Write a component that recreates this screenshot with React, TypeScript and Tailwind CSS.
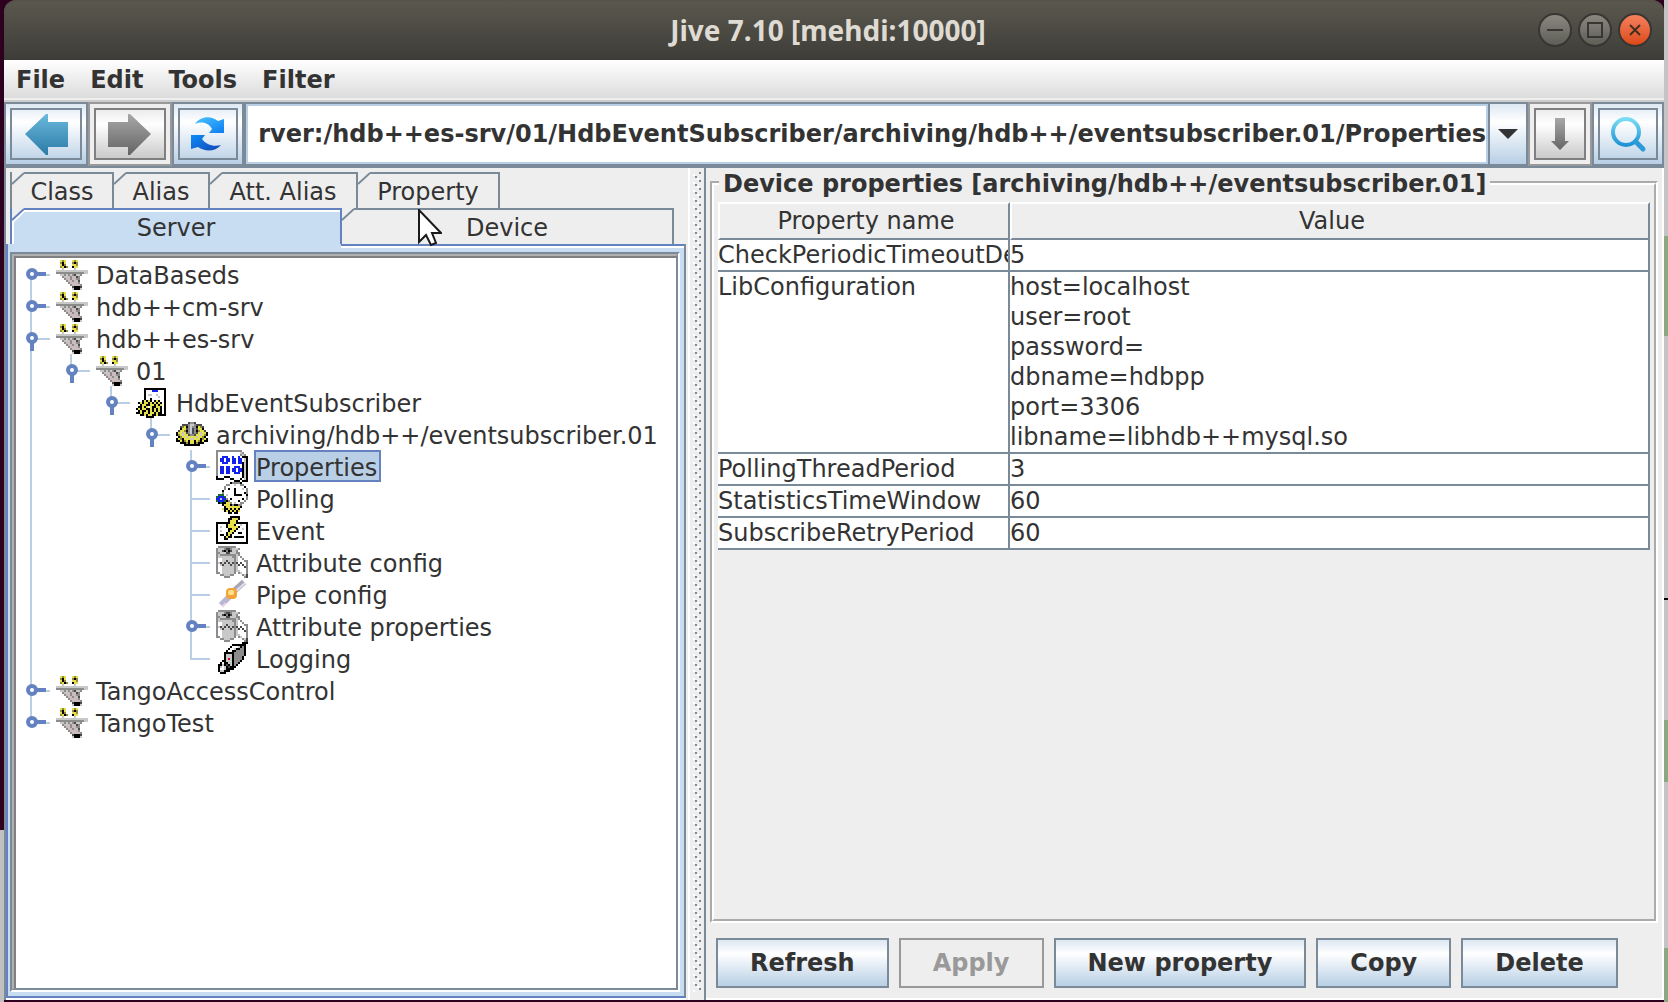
import { useState } from "react";
import type { ReactNode } from "react";

const palette: Record<string, string> = {
  K: "#000000",
  D: "#4a4a4a",
  G: "#8c8c8c",
  L: "#c8c8c8",
  W: "#ffffff",
  Y: "#e6e04a",
  O: "#8f8a3c",
  P: "#cbbdbd",
  B: "#1420f0",
  N: "#1d6b2a",
  R: "#d01020",
};

const sprites = {
  server: [
    "................",
    "..YOY...YOY.....",
    "..OKY...OKO.....",
    "..YKO...YYO.....",
    "..OYKO..KYY.....",
    "...L.....L......",
    "LLLLLLLLLLLLLLLL",
    "GGGGGGGGGGGGGGLL",
    "..LLGLGLGDLLG...",
    "...GPLPGPPDG....",
    "....GPPGPPGG....",
    ".....GPPGPPD....",
    "......GPPPPG....",
    ".......GPPPPG...",
    "........DKKKD...",
    "........LKKKL...",
  ],
  classDoc: [
    "................",
    "....KKKKKKKKKKK.",
    "....KWWWBBBWWWK.",
    "....KWWWWWWWWWK.",
    "....KWLLWWLWWWK.",
    "....KWWWWWWLWWK.",
    "....KWWKWWWWWWK.",
    "...KYKYKWKYKWWK.",
    ".KYKYYKYKYKYKWK.",
    "..KYYKKYYKYKYWK.",
    ".KKYKYWYKKYYKWK.",
    "KYKYYKKYKYKYKWK.",
    ".KYKKYKYKYKYKWK.",
    "KKYKYYKYYKYKKWK.",
    "..KKYKYYKKYKKKK.",
    ".....KKKK.......",
  ],
  device: [
    "................",
    "................",
    "......DGGD......",
    "...DDDGLLGDDD...",
    "..DOYKGLGGKYOD..",
    "..KYYDGLDGDYYK..",
    ".DYYOKGLDGKOYYD.",
    "KYYLYDGLDGDYLYYK",
    "KOYLYYDGGDYYLYOK",
    ".KOYYLYYYYLYYOK.",
    "KYOKYYYLLYYYKOYK",
    "KKYKOYKYYKYOKYKK",
    "..KKKOKYYKOKKK..",
    "....KKKKKKKK....",
    "................",
    "................",
  ],
  properties: [
    "GGGGGGGGGGGGG...",
    "GWWWWWWWWWWWLG..",
    "GWWWWWWWWWWWGLG.",
    "GWWBBBWWBWWBWKKK",
    "GWBBWBBWBBWBBWLK",
    "GWBBWBBWBBWBBWLK",
    "GWWBBBWWBBWBBKLK",
    "GWWWWWWWWWWWWKLK",
    "GWBBWBBWWBBBWKLK",
    "GWBBWBBWBBWBBKLK",
    "GWBBWBBWBBWBBKLK",
    "GWBBWBBWWBBBWKLK",
    "GWWWWWWWWWWWWKLK",
    "KWWWKKKWWWWWWKLK",
    "KKKK...KKWWWKWLK",
    ".........KKK.KKK",
  ],
  polling: [
    ".......KGGGGK...",
    ".....GGWWLWWGG..",
    "....GWWWWWWWWWK.",
    "....GWKWWKWWWLWG",
    "...KWWWWWKWWWWWG",
    "...GWWWWWKWWWWKG",
    ".NNNWLWWWKKKKWWK",
    "NBBBNWWWWWWWWWWG",
    "BBLBBGWKWWWWWKWG",
    "NBBBNKGWWWWKWWG.",
    ".KNKKYYGWLWWGG..",
    "...KYYYKGKKGG...",
    "....KYYYYYYYK...",
    "...YKKYKYKYK....",
    "....KYKYKYKY....",
    "......KK.KK.....",
  ],
  event: [
    "................",
    ".......KKKKK....",
    "......KKYYYK....",
    "......KYYYK.....",
    "KKKKKKKYYYKKKKKK",
    "KWWWWKYYYKWWLWWK",
    "KWLWWKYYYYYKWWWK",
    "KWWWWWKKYYKWWLWK",
    "KWLWWWKYYKWWWWWK",
    "KWWWWKYYKWWKKWWK",
    "KWKKWKYKWWWWWWWK",
    "KWWWKYKKWKKKKKWK",
    "KWWWKKWWWWWWWWWK",
    "KWWWWWWWWWWWWWWK",
    "KKKKKKKKKKKKKKKK",
    "................",
  ],
  attribute: [
    ".GGGGGGGGG......",
    "GLLLGDDGLLLG....",
    "GLLDKGKDLLG.....",
    "GGLLLDDLLLGG....",
    "GLGGGGGGGGLG....",
    "GLLLLLLLGGLWG...",
    "GWWLLLLLLGLWWG..",
    "GWWLLDLLLGLWWWGG",
    "GLDLDLDLDGDWDWWG",
    "GWLDLLLDLGLDWDWG",
    "GWWLLLLLLGLWWWDG",
    "GWWLLLLLLGLWWWWG",
    "GWWLLLLLLGLLWWWG",
    "GGWLLLLLLG.GLWWG",
    "..GGLLLGG....GLD",
    "....GGG.......GD",
  ],
  logging: [
    ".............KKK",
    "........KKKKKKK.",
    ".......KWWWLKGK.",
    "......KWWLKKGGK.",
    ".....KWWKKGGGGK.",
    "....KKKKKGGGGGK.",
    "....KLLLKGGGGGK.",
    "....KLLLKGGGGK..",
    "....KLRLKGGGGK..",
    "...KKLLLKGGGK...",
    "..KWKKLLKGGK....",
    ".KKLKDKLKGK.....",
    ".KLWLKDKKK......",
    ".KWWLKKKK.......",
    ".KLLKKK.........",
    "..KKK...........",
  ],
};

type SpriteName = keyof typeof sprites;

function Sprite({ name }: { name: SpriteName }) {
  return (
    <svg viewBox="0 0 16 16" className="size-8 shrink-0" shapeRendering="crispEdges" aria-hidden="true">
      {sprites[name].flatMap((row, y) =>
        row.split("").map((ch, x) =>
          palette[ch] ? <rect key={`${x}-${y}`} x={x} y={y} width="1" height="1" fill={palette[ch]} /> : null
        )
      )}
    </svg>
  );
}

function PipeIcon() {
  return (
    <svg viewBox="0 0 32 32" className="size-8 shrink-0" aria-hidden="true">
      <path d="M5 27 L14 18" stroke="#b9b6d2" strokeWidth="6" />
      <path d="M18 13 L28 4" stroke="#a9a7b8" strokeWidth="6" />
      <path d="M20 13 L29 5" stroke="#e3e0ee" strokeWidth="2" />
      <path d="M6 29 L10 25" stroke="#f0d5ea" strokeWidth="2" />
      <rect x="10" y="10" width="11" height="11" rx="4" fill="#f2a43a" />
      <rect x="12" y="12" width="6" height="5" rx="2" fill="#ffe08a" />
    </svg>
  );
}

interface TreeRow {
  label: string;
  depth: number;
  icon: SpriteName | "pipe";
  handle?: "open" | "closed";
  lines: number[];
  first?: boolean;
  last?: boolean;
}

// lines: the outer levels whose guide runs straight through the row
const rows: TreeRow[] = [
  { label: "DataBaseds", depth: 0, icon: "server", handle: "closed", lines: [], first: true },
  { label: "hdb++cm-srv", depth: 0, icon: "server", handle: "closed", lines: [] },
  { label: "hdb++es-srv", depth: 0, icon: "server", handle: "open", lines: [] },
  { label: "01", depth: 1, icon: "server", handle: "open", lines: [0], last: true },
  { label: "HdbEventSubscriber", depth: 2, icon: "classDoc", handle: "open", lines: [0], last: true },
  { label: "archiving/hdb++/eventsubscriber.01", depth: 3, icon: "device", handle: "open", lines: [0], last: true },
  { label: "Properties", depth: 4, icon: "properties", handle: "closed", lines: [0] },
  { label: "Polling", depth: 4, icon: "polling", lines: [0] },
  { label: "Event", depth: 4, icon: "event", lines: [0] },
  { label: "Attribute config", depth: 4, icon: "attribute", lines: [0] },
  { label: "Pipe config", depth: 4, icon: "pipe", lines: [0] },
  { label: "Attribute properties", depth: 4, icon: "attribute", handle: "closed", lines: [0] },
  { label: "Logging", depth: 4, icon: "logging", lines: [0], last: true },
  { label: "TangoAccessControl", depth: 0, icon: "server", handle: "closed", lines: [] },
  { label: "TangoTest", depth: 0, icon: "server", handle: "closed", lines: [], last: true },
];

function Guides({ row }: { row: TreeRow }) {
  const x = row.depth * 40 + 15;
  const width = row.depth * 40 + 40;
  const top = row.first ? 16 : 0;
  const bottom = row.last ? 18 : 32;

  return (
    <svg width={width} height="32" viewBox={`0 0 ${width} 32`} className="shrink-0" aria-hidden="true">
      {row.lines.map((level) => (
        <rect key={level} x={level * 40 + 14} y="0" width="2" height="32" fill="#b8cfe5" />
      ))}
      <rect x={x - 1} y={top} width="2" height={bottom - top} fill="#b8cfe5" />
      <rect x={x} y="16" width="19" height="2" fill="#b8cfe5" />
      {row.handle === "closed" && <path d={`M${x + 5} 16 H${x + 15}`} stroke="#6382bf" strokeWidth="4" />}
      {row.handle === "open" && <path d={`M${x + 1} 20 V29`} stroke="#6382bf" strokeWidth="4" />}
      {row.handle && <circle cx={x + 1} cy="16" r="4" fill="#fff" stroke="#6382bf" strokeWidth="4" />}
    </svg>
  );
}

function Tree() {
  const [selected, setSelected] = useState("Properties");

  return (
    <ul className="min-h-0 flex-1 overflow-hidden bg-white" role="tree" aria-label="Servers">
      {rows.map((row) => (
        <li
          key={row.label}
          role="treeitem"
          aria-selected={row.label === selected}
          onClick={() => setSelected(row.label)}
          className="flex h-8 items-center whitespace-nowrap">
          <Guides row={row} />
          {row.icon === "pipe" ? <PipeIcon /> : <Sprite name={row.icon} />}
          <span
            className={
              row.label === selected
                ? "ml-1.5 h-8 border-2 border-[#6382bf] bg-[#b8cfe5] pr-0.5 leading-8"
                : "ml-1.5 h-8 border-2 border-transparent pr-0.5 leading-8"
            }>
            {row.label}
          </span>
        </li>
      ))}
    </ul>
  );
}

function TabCorner({ selected }: { selected?: boolean }) {
  return (
    <svg viewBox="0 0 12 36" className="h-9 w-3 shrink-0" aria-hidden="true">
      {selected && <path d="M1 36 V13 L12 2 V36 Z" fill="#c8ddf2" />}
      {selected && <path d="M1 36 V14 L12 3" fill="none" stroke="#fff" strokeWidth="2" />}
      <path d="M0 12 L12 1" stroke={selected ? "#6382bf" : "#7a8a99"} strokeWidth="2" />
    </svg>
  );
}

function Tab({ label, className }: { label: string; className: string }) {
  return (
    <button role="tab" className={`flex h-9 ${className}`}>
      <TabCorner />
      <span className="h-9 flex-1 border-t-2 border-r-2 border-[#7a8a99] pr-3 text-center leading-9">{label}</span>
    </button>
  );
}

function BrowserPanel() {
  return (
    <section className="flex w-[684px] shrink-0 flex-col border-l-2 border-[#7a8a99] pt-1 pr-0.5">
      <div role="tablist" className="ml-1 flex flex-col">
        <div className="flex border-l-2 border-[#7a8a99]">
          <Tab label="Class" className="w-[102px]" />
          <Tab label="Alias" className="w-24" />
          <Tab label="Att. Alias" className="w-[148px]" />
          <Tab label="Property" className="w-[142px]" />
        </div>
        <div className="mr-3 flex border-l-2 border-[#6382bf]">
          <button role="tab" aria-selected="true" className="flex h-9 w-[330px]">
            <TabCorner selected />
            <span className="h-9 flex-1 border-t-2 border-r-2 border-[#6382bf] bg-[#c8ddf2] pr-3 text-center leading-9 shadow-[inset_0_2px_#fff]">
              Server
            </span>
          </button>
          <Tab label="Device" className="flex-1" />
        </div>
      </div>
      <div className="flex min-h-0 flex-1 flex-col border-2 border-t-0 border-[#7a8a99] border-b-[#6382bf] border-l-[#6382bf] bg-[#c8ddf2]">
        <div className="flex h-2 shrink-0 pl-[333px]">
          <div className="h-1 flex-1 border-t-2 border-b-2 border-t-[#6382bf] border-b-white" />
        </div>
        <div className="mr-1 mb-1 ml-0.5 flex min-h-0 flex-1 flex-col border-2 border-t-[#7a8a99] border-r-white border-b-white border-l-[#7a8a99]">
          <div className="flex min-h-0 flex-1 flex-col border-2 border-t-[#b0b0b0] border-r-[#7a8a99] border-b-[#7a8a99] border-l-[#b0b0b0]">
            <div className="flex min-h-0 flex-1 flex-col border-t-2 border-l-2 border-[#808080]">
              <Tree />
            </div>
          </div>
        </div>
      </div>
      <div className="h-0.5 shrink-0 bg-white" />
    </section>
  );
}

function Divider() {
  return (
    <div className="flex w-[18px] shrink-0 cursor-col-resize border-r-2 border-l-2 border-r-[#7a8a99] border-l-white pt-1 pb-2">
      <svg className="h-full w-full" shapeRendering="crispEdges" aria-hidden="true">
        <defs>
          <pattern id="bumps" width="16" height="8" patternUnits="userSpaceOnUse">
            <rect x="3" y="2" width="2" height="2" fill="#fff" />
            <rect x="5" y="4" width="2" height="2" fill="#7a8a99" />
            <rect x="7" y="6" width="2" height="2" fill="#fff" />
            <rect x="9" y="0" width="2" height="2" fill="#7a8a99" />
          </pattern>
        </defs>
        <rect width="14" height="100%" fill="url(#bumps)" />
      </svg>
    </div>
  );
}

const properties = [
  { name: "CheckPeriodicTimeoutDe", value: "5" },
  {
    name: "LibConfiguration",
    value: "host=localhost\nuser=root\npassword=\ndbname=hdbpp\nport=3306\nlibname=libhdb++mysql.so",
  },
  { name: "PollingThreadPeriod", value: "3" },
  { name: "StatisticsTimeWindow", value: "60" },
  { name: "SubscribeRetryPeriod", value: "60" },
];

const headCell = "border-2 border-t-white border-r-[#7a8a99] border-b-[#7a8a99] border-l-white p-0 pl-1 text-center font-normal";
const cell = "overflow-hidden border-r-2 border-b-2 border-[#7a8a99] bg-white p-0 align-top";

function PropertyTable() {
  return (
    <table className="w-full table-fixed border-separate border-spacing-0 text-left leading-[30px]">
      <thead>
        <tr className="h-[38px]">
          <th className={`${headCell} w-[292px]`}>Property name</th>
          <th className={headCell}>Value</th>
        </tr>
      </thead>
      <tbody>
        {properties.map((p) => (
          <tr key={p.name}>
            <td className={`${cell} whitespace-nowrap`}>{p.name}</td>
            <td className={`${cell} whitespace-pre`}>{p.value}</td>
          </tr>
        ))}
      </tbody>
    </table>
  );
}

function ActionButton({ children, disabled }: { children: ReactNode; disabled?: boolean }) {
  return (
    <button
      disabled={disabled}
      className="h-[50px] border-2 border-[#7a8a99] bg-linear-to-b from-[#dde8f3] via-white via-30% to-[#b8cfe5] px-8 font-bold whitespace-nowrap disabled:border-[#999] disabled:bg-none disabled:text-[#999]">
      {children}
    </button>
  );
}

function PropertiesPanel() {
  return (
    <section className="flex min-w-0 flex-1 flex-col border-r-2 border-b-2 border-white">
      <fieldset className="mr-1 ml-1 min-h-0 min-w-0 flex-1 overflow-hidden border-4 border-white px-1 pt-1 [border-style:groove]">
        <legend className="ml-px px-1 pt-0.5 leading-7 font-bold">
          Device properties [archiving/hdb++/eventsubscriber.01]
        </legend>
        <PropertyTable />
      </fieldset>
      <div className="flex gap-2.5 pt-[15px] pb-2.5 pl-2.5">
        <ActionButton>Refresh</ActionButton>
        <ActionButton disabled>Apply</ActionButton>
        <ActionButton>New property</ActionButton>
        <ActionButton>Copy</ActionButton>
        <ActionButton>Delete</ActionButton>
      </div>
    </section>
  );
}

function ToolButton({ label, width, children }: { label: string; width: string; children: ReactNode }) {
  return (
    <button
      aria-label={label}
      className={`h-[60px] shrink-0 bg-linear-to-b from-[#dde8f3] via-white via-30% to-[#b8cfe5] p-1 ${width}`}>
      <span className="flex h-full items-center justify-center border-2 border-[#7a8a99]">{children}</span>
    </button>
  );
}

function GreyToolButton({ label, width, children }: { label: string; width: string; children: ReactNode }) {
  return (
    <button
      aria-label={label}
      disabled
      className={`h-16 shrink-0 border-2 border-[#999] bg-[#eee] p-1 ${width}`}>
      <span className="flex h-full items-center justify-center border-2 border-[#7f7f7f] bg-linear-to-b from-[#ececec] via-white via-30% to-[#cacaca]">
        {children}
      </span>
    </button>
  );
}

function Toolbar() {
  const [path, setPath] = useState("rver:/hdb++es-srv/01/HdbEventSubscriber/archiving/hdb++/eventsubscriber.01/Properties");

  return (
    <div className="flex h-[66px] shrink-0 items-center gap-0.5 bg-[#7a8a99] px-0.5 pb-0.5">
      <ToolButton label="Back" width="w-20">
        <svg viewBox="0 0 44 42" className="h-[42px] w-11">
          <defs>
            <linearGradient id="back" x2="0" y2="1">
              <stop offset="0" stopColor="#6cb8de" />
              <stop offset="1" stopColor="#2a7ba6" />
            </linearGradient>
          </defs>
          <path d="M1 21 L22 1 H24 V9 H44 V34 H24 V42 H22 Z" fill="url(#back)" />
        </svg>
      </ToolButton>
      <GreyToolButton label="Forward" width="w-[84px]">
        <svg viewBox="0 0 44 42" className="h-[42px] w-11">
          <defs>
            <linearGradient id="forward" x2="0" y2="1">
              <stop offset="0" stopColor="#a8a8a8" />
              <stop offset="1" stopColor="#646464" />
            </linearGradient>
          </defs>
          <path d="M43 21 L22 1 H20 V9 H0 V34 H20 V42 H22 Z" fill="url(#forward)" />
        </svg>
      </GreyToolButton>
      <ToolButton label="Refresh" width="w-[68px]">
        <svg viewBox="0 0 36 36" className="size-9">
          <defs>
            <linearGradient id="upper" x2="1" y2="1">
              <stop offset="0" stopColor="#4cc4ff" />
              <stop offset="1" stopColor="#0a7df0" />
            </linearGradient>
            <linearGradient id="lower" x2="1" y2="1">
              <stop offset="0" stopColor="#0a8cf8" />
              <stop offset="1" stopColor="#1546b4" />
            </linearGradient>
          </defs>
          <path d="M5 8 C10 0 21 -1 28 5 L34 3 V17 H19 L22 13 C19 7 12 5 5 8 Z" fill="url(#upper)" />
          <path d="M31 29 C25 36 15 36 8 31 L1 33 V19 H15 L12 23 C16 29 24 31 31 29 Z" fill="url(#lower)" />
        </svg>
      </ToolButton>
      <input
        aria-label="Path"
        value={path}
        onChange={(e) => setPath(e.target.value)}
        className="ml-0.5 h-[60px] min-w-0 flex-1 border-2 border-[#b8cfe5] bg-white text-right font-bold outline-none"
      />
      <button
        aria-label="Show path history"
        className="flex h-[60px] w-9 shrink-0 items-center justify-center bg-linear-to-b from-[#dde8f3] via-white via-30% to-[#b8cfe5]">
        <svg viewBox="0 0 20 10" className="h-2.5 w-5">
          <path d="M0 0 H20 L10 10 Z" fill="#333" />
        </svg>
      </button>
      <GreyToolButton label="Go to" width="w-16">
        <svg viewBox="0 0 18 34" className="h-[34px] w-[18px]">
          <path d="M4 1 H14 V24 H18 L9 33 L0 24 H4 Z" fill="url(#forward)" />
        </svg>
      </GreyToolButton>
      <ToolButton label="Search" width="w-[68px]">
        <svg viewBox="0 0 38 38" className="size-[38px]" fill="none">
          <defs>
            <linearGradient id="lens" x2="0" y2="1">
              <stop offset="0" stopColor="#7adcf4" />
              <stop offset="1" stopColor="#1f93d6" />
            </linearGradient>
          </defs>
          <circle cx="17" cy="17" r="13" stroke="url(#lens)" strokeWidth="4" />
          <path d="M27 27 L34 34" stroke="#2c9bd8" strokeWidth="5" strokeLinecap="round" />
        </svg>
      </ToolButton>
    </div>
  );
}

function TitleBar() {
  return (
    <header className="flex h-[60px] shrink-0 items-center rounded-t-xl bg-linear-to-b from-[#5b594e] to-[#3d3c38] pr-3 shadow-[inset_0_2px_#55534a]">
      <div className="w-[114px]" />
      <h1 className="flex-1 text-center font-['Noto_Sans',sans-serif] text-[28px] leading-8 font-bold text-[#dfdbd2]">
        Jive 7.10 [mehdi:10000]
      </h1>
      <div className="flex gap-1.5">
        <button
          aria-label="Minimize"
          className="flex size-[34px] items-center justify-center rounded-full border-2 border-[#373632] bg-linear-to-b from-[#8a887f] to-[#5f5e57]">
          <span className="h-0.5 w-4 bg-[#373632]" />
        </button>
        <button
          aria-label="Maximize"
          className="flex size-[34px] items-center justify-center rounded-full border-2 border-[#373632] bg-linear-to-b from-[#8a887f] to-[#5f5e57]">
          <span className="size-4 border-2 border-[#373632]" />
        </button>
        <button
          aria-label="Close"
          className="flex size-[34px] items-center justify-center rounded-full border-2 border-[#373632] bg-linear-to-b from-[#f4805c] to-[#dd4814]">
          <svg viewBox="0 0 12 12" className="size-3">
            <path d="M1 1 L11 11 M11 1 L1 11" stroke="#43301f" strokeWidth="2" />
          </svg>
        </button>
      </div>
    </header>
  );
}

function MenuBar() {
  return (
    <nav className="flex h-[42px] shrink-0 gap-[25px] border-b-2 border-[#ccc] bg-linear-to-b from-white to-[#dadada] pl-3 shadow-[inset_0_-2px_#eee]">
      {["File", "Edit", "Tools", "Filter"].map((item) => (
        <button key={item} className="leading-[38px] font-bold">
          {item}
        </button>
      ))}
    </nav>
  );
}

function Pointer() {
  return (
    <svg viewBox="0 0 24 38" className="pointer-events-none absolute top-[209px] left-[418px] h-[38px] w-6" aria-hidden="true">
      <path d="M1 1 V33 L8 26 L13 36 L18 34 L14 24 H23 Z" fill="#fff" stroke="#1a1a1a" strokeWidth="2" />
    </svg>
  );
}

export default function App() {
  return (
    <div className="relative flex h-screen overflow-hidden bg-[#2c001e] font-['DejaVu_Sans',sans-serif] text-2xl text-[#333]">
      <div className="flex w-1 shrink-0 flex-col">
        <div className="flex-1" />
        <div className="h-[172px] bg-[#c0c0c0]" />
      </div>
      <div className="flex min-w-0 flex-1 flex-col pb-0.5">
        <TitleBar />
        <MenuBar />
        <Toolbar />
        <main className="flex min-h-0 flex-1 bg-[#eee]">
          <BrowserPanel />
          <Divider />
          <PropertiesPanel />
        </main>
      </div>
      <div className="flex w-1 shrink-0 flex-col bg-[#c4c4c4]">
        <div className="h-[236px]" />
        <div className="h-[100px] bg-[#8ba882]" />
        <div className="h-[262px]" />
        <div className="h-0.5 bg-black" />
        <div className="h-[120px]" />
        <div className="h-[62px] bg-[#8ba882]" />
        <div className="h-[166px]" />
        <div className="flex-1 bg-[#8ba882]" />
      </div>
      <Pointer />
    </div>
  );
}
